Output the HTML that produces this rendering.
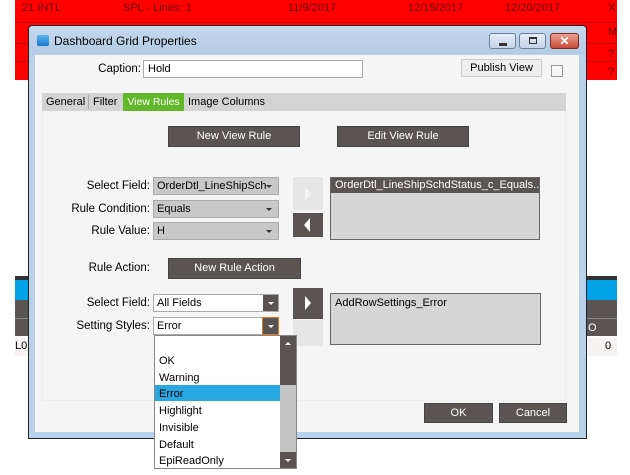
<!DOCTYPE html>
<html><head><style>
*{margin:0;padding:0;box-sizing:border-box}
body{width:630px;height:475px;background:#fff;position:relative;overflow:hidden;font-family:"Liberation Sans",Arial,sans-serif;font-size:11px;color:#000}
.a{position:absolute;white-space:nowrap}
.red{background:#f00;}
.lbl{position:absolute;text-align:right;font-size:11.5px;white-space:nowrap}
.dd{position:absolute;background:#c8c8c8;border:1px solid #aaa;font-size:11px;padding:2px 3px;height:18px}
.dd:after{content:"";position:absolute;right:6px;top:7px;border-left:3px solid transparent;border-right:3px solid transparent;border-top:3px solid #333}
.btn{position:absolute;background:#5a5552;color:#fff;text-align:center;font-size:11px;border:1px solid #444}
.list{position:absolute;background:#d6d6d6;border:1px solid #666}
</style></head><body>
<div class="a red" style="left:15px;top:0;width:602px;height:80px"></div>
<div class="a" style="left:15px;top:22px;width:602px;height:1px;background:#c00"></div>
<div class="a" style="left:15px;top:43px;width:602px;height:1px;background:#c00"></div>
<div class="a" style="left:15px;top:61px;width:602px;height:1px;background:#c00"></div>
<div class="a" style="left:22px;top:2px;color:#600;font-size:11px">21 INTL</div>
<div class="a" style="left:123px;top:2px;color:#600;font-size:11px">SPL - Lines: 1</div>
<div class="a" style="left:288px;top:2px;color:#600;font-size:11px">11/9/2017</div>
<div class="a" style="left:408px;top:2px;color:#600;font-size:11px">12/15/2017</div>
<div class="a" style="left:505px;top:2px;color:#600;font-size:11px">12/20/2017</div>
<div class="a" style="left:608px;top:2px;color:#600">X</div>
<div class="a" style="left:608px;top:26px;color:#600">M</div>
<div class="a" style="left:608px;top:48px;color:#600">?</div>
<div class="a" style="left:608px;top:66px;color:#600">?</div>
<div class="a" style="left:15px;top:276px;width:602px;height:4px;background:#333"></div>
<div class="a" style="left:15px;top:280px;width:602px;height:20px;background:#00a2e8"></div>
<div class="a" style="left:15px;top:300px;width:602px;height:36px;background:#5a5552"></div>
<div class="a" style="left:15px;top:318px;width:602px;height:1px;background:#888"></div>
<div class="a" style="left:588px;top:322px;color:#fff">O</div>
<div class="a" style="left:15px;top:338px;width:602px;height:18px;background:#f7f3f3"></div>
<div class="a" style="left:15px;top:340px;">L0</div>
<div class="a" style="left:605px;top:340px;">0</div>
<div class="a" style="left:28px;top:25px;width:559px;height:414px;background:#b9d1ea;border:1px solid #222;border-radius:4px 4px 0 0"></div>
<div class="a" style="left:29px;top:26px;width:557px;height:28px;background:linear-gradient(#c5d9ef,#b4cbe5);border-radius:4px 4px 0 0"></div>
<div class="a" style="left:37px;top:35px;width:12px;height:11px;background:linear-gradient(#5cb6f0,#1a77c9);border-radius:2px"></div>
<div class="a" style="left:54px;top:34px;font-size:12px">Dashboard Grid Properties</div>
<div class="a" style="left:489px;top:33px;width:27px;height:16px;border:1px solid #6d7f99;border-radius:3px;background:linear-gradient(#e4ecf6,#c4d3e6)"><div class="a" style="left:9px;top:9px;width:8px;height:3px;background:#333"></div></div>
<div class="a" style="left:519px;top:33px;width:27px;height:16px;border:1px solid #6d7f99;border-radius:3px;background:linear-gradient(#e4ecf6,#c4d3e6)"><div class="a" style="left:9px;top:3px;width:8px;height:7px;border:1px solid #333;border-top-width:2px"></div></div>
<div class="a" style="left:550px;top:33px;width:29px;height:16px;border:1px solid #7a2b22;border-radius:3px;background:linear-gradient(#e8a193,#c74a36);color:#fff;font-weight:bold;text-align:center;font-size:12px;line-height:14px">✕</div>
<div class="a" style="left:35px;top:55px;width:544px;height:377px;background:#f5f5f5"></div>
<div class="lbl" style="left:60px;top:63px;width:81px">Caption:</div>
<div class="a" style="left:143px;top:60px;width:220px;height:18px;background:#fff;border:1px solid #aaa;padding:2px 4px;font-size:11px">Hold</div>
<div class="a" style="left:461px;top:59px;width:81px;height:18px;background:#eee;border:1px solid #ccc;text-align:center;line-height:16px;font-size:11px">Publish View</div>
<div class="a" style="left:551px;top:65px;width:12px;height:12px;background:#f7f7f7;border:1px solid #999"></div>
<div class="a" style="left:42px;top:93px;width:524px;height:18px;background:#d4d4d4"></div>
<div class="a" style="left:46px;top:96px">General</div>
<div class="a" style="left:88px;top:95px;width:1px;height:14px;background:#aaa"></div>
<div class="a" style="left:93px;top:96px">Filter</div>
<div class="a" style="left:123px;top:93px;width:61px;height:18px;background:#63b82a;color:#fff;padding:3px 0;text-align:center;font-size:10.5px">View Rules</div>
<div class="a" style="left:188px;top:96px">Image Columns</div>
<div class="a" style="left:42px;top:111px;width:524px;height:290px;border:1px solid #eee;border-top:none"></div>
<div class="btn" style="left:168px;top:126px;width:132px;height:21px;line-height:19px">New View Rule</div>
<div class="btn" style="left:337px;top:126px;width:132px;height:21px;line-height:19px">Edit View Rule</div>
<div class="lbl" style="left:50px;top:180px;width:100px">Select Field:</div>
<div class="dd" style="left:153px;top:177px;width:126px;overflow:hidden;white-space:nowrap">OrderDtl_LineShipSch</div>
<div class="lbl" style="left:50px;top:203px;width:100px">Rule Condition:</div>
<div class="dd" style="left:153px;top:200px;width:126px">Equals</div>
<div class="lbl" style="left:50px;top:225px;width:100px">Rule Value:</div>
<div class="dd" style="left:153px;top:222px;width:126px">H</div>
<div class="a" style="left:293px;top:177px;width:30px;height:33px;background:#e6e6e6"><div class="a" style="left:12px;top:10px;border-top:7px solid transparent;border-bottom:7px solid transparent;border-left:6px solid #f4f4f4"></div></div>
<div class="a" style="left:293px;top:213px;width:30px;height:24px;background:#5a5552"><div class="a" style="left:11px;top:5px;border-top:7px solid transparent;border-bottom:7px solid transparent;border-right:6px solid #fff"></div></div>
<div class="list" style="left:330px;top:177px;width:210px;height:63px"><div style="background:#5a5552;color:#fff;padding:1px 4px;height:15px;white-space:nowrap;overflow:hidden">OrderDtl_LineShipSchdStatus_c_Equals...</div></div>
<div class="lbl" style="left:50px;top:262px;width:100px">Rule Action:</div>
<div class="btn" style="left:168px;top:258px;width:133px;height:21px;line-height:19px">New Rule Action</div>
<div class="lbl" style="left:50px;top:297px;width:100px">Select Field:</div>
<div class="a" style="left:153px;top:294px;width:126px;height:18px;background:#fff;border:1px solid #aaa;padding:2px 3px">All Fields</div>
<div class="a" style="left:263px;top:295px;width:15px;height:16px;background:#5a5552"><div class="a" style="left:5px;top:7px;border-left:3px solid transparent;border-right:3px solid transparent;border-top:3px solid #fff"></div></div>
<div class="lbl" style="left:50px;top:320px;width:100px">Setting Styles:</div>
<div class="a" style="left:153px;top:317px;width:126px;height:18px;background:#fff;border:1px solid #aaa;padding:2px 3px">Error</div>
<div class="a" style="left:262px;top:317px;width:17px;height:18px;background:#5a5552;border:1px solid #e07a1f"><div class="a" style="left:5px;top:7px;border-left:3px solid transparent;border-right:3px solid transparent;border-top:3px solid #fff"></div></div>
<div class="a" style="left:293px;top:288px;width:30px;height:31px;background:#5a5552"><div class="a" style="left:12px;top:8px;border-top:7px solid transparent;border-bottom:7px solid transparent;border-left:6px solid #fff"></div></div>
<div class="a" style="left:293px;top:320px;width:30px;height:26px;background:#e6e6e6"></div>
<div class="list" style="left:330px;top:293px;width:211px;height:52px;padding:3px 4px">AddRowSettings_Error</div>
<div class="btn" style="left:424px;top:403px;width:69px;height:20px;line-height:18px">OK</div>
<div class="btn" style="left:499px;top:403px;width:68px;height:20px;line-height:18px">Cancel</div>
<div class="a" style="left:154px;top:335px;width:143px;height:134px;background:#fff;border:1px solid #888"></div>
<div class="a" style="left:280px;top:336px;width:16px;height:132px;background:#c5c5c5"></div>
<div class="a" style="left:280px;top:336px;width:16px;height:49px;background:#5a5552"></div>
<div class="a" style="left:280px;top:452px;width:16px;height:16px;background:#5a5552"></div>
<div class="a" style="left:285px;top:342px;border-left:3px solid transparent;border-right:3px solid transparent;border-bottom:3px solid #fff"></div>
<div class="a" style="left:285px;top:459px;border-left:3px solid transparent;border-right:3px solid transparent;border-top:3px solid #fff"></div>
<div class="a" style="left:155px;top:385px;width:125px;height:16px;background:#29a7e1"></div>
<div class="a" style="left:159px;top:353px;line-height:16.7px;font-size:11px">OK<br>Warning<br>Error<br>Highlight<br>Invisible<br>Default<br>EpiReadOnly</div>
</body></html>
